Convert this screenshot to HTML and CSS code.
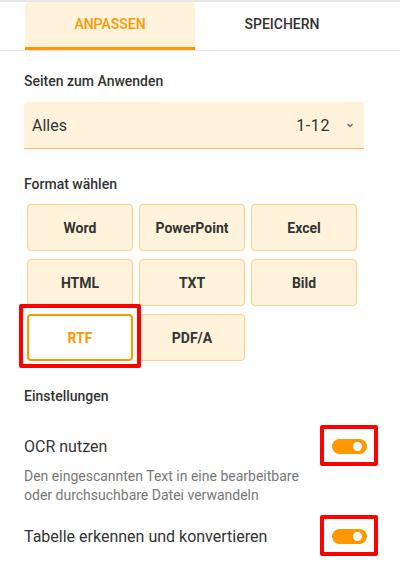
FILE: index.html
```html
<!DOCTYPE html>
<html lang="de">
<head>
  <meta charset="UTF-8" />
  <meta name="viewport" content="width=device-width, initial-scale=1.0"/>
  <title>Konvertieren</title>
  <link rel="stylesheet" href="styles.css">
</head>
<body>
  <div class="topline"></div>

  <div class="tabs">
    <div class="tab active">ANPASSEN</div>
    <div class="tab">SPEICHERN</div>
  </div>

  <div class="panel">
    <div class="label first">Seiten zum Anwenden</div>
    <div class="select">
      <span>Alles</span>
      <span class="range">1-12
        <svg width="10" height="10" viewBox="0 0 10 10"><path d="M2.5 4 L5 6.5 L7.5 4" fill="none" stroke="#666" stroke-width="1.4"/></svg>
      </span>
    </div>

    <div class="label">Format wählen</div>
    <div class="formats">
      <div class="fmt">Word</div>
      <div class="fmt">PowerPoint</div>
      <div class="fmt">Excel</div>
      <div class="fmt">HTML</div>
      <div class="fmt">TXT</div>
      <div class="fmt">Bild</div>
      <div class="fmt selected marked">RTF</div>
      <div class="fmt">PDF/A</div>
    </div>

    <div class="label">Einstellungen</div>

    <div class="option">
      <span class="option-title">OCR nutzen</span>
      <span class="toggle marked"></span>
    </div>
    <p class="hint">Den eingescannten Text in eine bearbeitbare<br>oder durchsuchbare Datei verwandeln</p>

    <div class="option second">
      <span class="option-title">Tabelle erkennen und konvertieren</span>
      <span class="toggle marked"></span>
    </div>
  </div>
</body>
</html>
```

FILE: styles.css
```css
body {
  font-family: Roboto, 'Noto Sans', sans-serif;
  margin: 0;
  padding-bottom: 30px;
  background-color: #fff;
  color: #333;
}
.topline {
  height: 2px;
  background-color: #e8e8e8;
}
.tabs {
  display: flex;
  padding-left: 25px;
  border-bottom: 1px solid #e4e4e4;
}
.tab {
  width: 172px;
  height: 45px;
  line-height: 45px;
  text-align: center;
  font-size: 14px;
  font-weight: 500;
  color: #333;
  border-bottom: 3px solid transparent;
}
.tab + .tab {
  width: 174px;
}
.tab.active {
  width: 170px;
  background-color: #fff3dc;
  color: #ff9800;
  border-bottom-color: #ff9800;
  border-radius: 4px 4px 0 0;
}
.panel {
  padding: 0 24px;
}
.label {
  font-size: 14px;
  font-weight: 500;
  line-height: 20px;
  margin-top: 25px;
  color: #333;
}
.label.first {
  margin-top: 20px;
}
.select {
  margin-top: 11px;
  width: 340px;
  height: 46px;
  background-color: #fff3dc;
  border-bottom: 1px solid #f2b466;
  border-radius: 4px 4px 0 0;
  display: flex;
  align-items: center;
  justify-content: space-between;
  font-size: 16px;
  color: #333;
}
.select span:first-child {
  padding-left: 8px;
}
.range {
  display: flex;
  align-items: center;
  gap: 15px;
  padding-right: 9px;
  letter-spacing: 0.6px;
}
.formats {
  margin-top: 10px;
  margin-left: 3px;
  display: grid;
  grid-template-columns: repeat(3, 106px);
  grid-auto-rows: 47px;
  column-gap: 6px;
  row-gap: 8px;
}
.fmt {
  box-sizing: border-box;
  border: 1px solid #ffd089;
  background-color: #fff3dc;
  border-radius: 4px;
  display: flex;
  align-items: center;
  justify-content: center;
  font-size: 14px;
  font-weight: 700;
  color: #333;
}
.fmt.selected {
  background-color: #fff;
  border: 2px solid #ff9800;
  color: #ff9800;
}
.marked {
  position: relative;
}
.fmt.marked::after {
  content: "";
  position: absolute;
  top: -12px;
  bottom: -9px;
  left: -10px;
  right: -10px;
  border: 4px solid #ff0000;
  border-radius: 2px;
}
.option {
  display: flex;
  align-items: center;
  justify-content: space-between;
  margin-top: 30px;
  padding-right: 9px;
  height: 20px;
}
.option.second {
  margin-top: 21px;
}
.option-title {
  font-size: 16px;
  color: #333;
}
.toggle {
  display: block;
  width: 35px;
  height: 15px;
  border-radius: 8px;
  background-color: #ff9800;
}
.toggle::before {
  content: "";
  position: absolute;
  right: 5px;
  top: 3px;
  width: 9px;
  height: 9px;
  border-radius: 50%;
  background-color: #fff;
}
.toggle.marked::after {
  content: "";
  position: absolute;
  top: -14px;
  bottom: -12px;
  left: -12px;
  right: -11px;
  border: 4px solid #ff0000;
  border-radius: 2px;
}
.hint {
  margin: 11px 0 0;
  font-size: 14px;
  line-height: 19px;
  color: #777;
}
```
